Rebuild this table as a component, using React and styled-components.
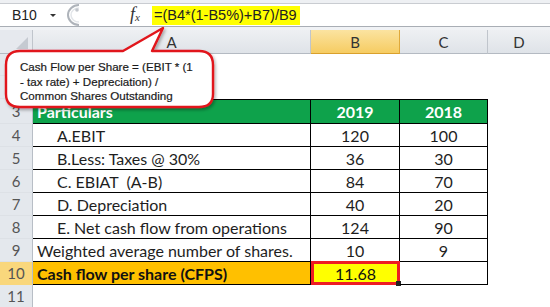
import React from "react";
import styled, { createGlobalStyle, css } from "styled-components";

const GlobalStyle = createGlobalStyle`
  html, body {
    margin: 0;
    padding: 0;
    background: #ffffff;
  }
  body {
    font-family: "Lato", "Liberation Sans", sans-serif;
    color: #222;
  }
`;

const rows = [
  { n: 3, label: "Particulars", b: "2019", c: "2018", kind: "head" },
  { n: 4, label: "A.EBIT", b: "120", c: "100", indent: true },
  { n: 5, label: "B.Less: Taxes @ 30%", b: "36", c: "30", indent: true },
  { n: 6, label: "C. EBIAT  (A-B)", b: "84", c: "70", indent: true },
  { n: 7, label: "D. Depreciation", b: "40", c: "20", indent: true },
  { n: 8, label: "E. Net cash flow from operations", b: "124", c: "90", indent: true },
  { n: 9, label: "Weighted average number of shares.", b: "10", c: "9" },
  { n: 10, label: "Cash flow per share (CFPS)", b: "11.68", c: "", kind: "total" },
];

export default function App() {
  return (
    <>
      <GlobalStyle />
      <Page>
        <FormulaBar>
          <NameBox>
            <span>B10</span>
            <DropArrow />
          </NameBox>
          <Grip>
            <svg width="16" height="22" viewBox="0 0 16 22">
              <path d="M14 1 A11 10 0 0 0 14 21" fill="none" stroke="#aeb3ba" strokeWidth="2" />
              <path d="M14 4 A8 7 0 0 0 14 18" fill="none" stroke="#e2e5e9" strokeWidth="1.5" />
              <circle cx="12" cy="6" r="1.8" fill="#c2c6cc" />
            </svg>
          </Grip>
          <Fx>
            <i>f</i>
            <sub>x</sub>
          </Fx>
          <Formula>=(B4*(1-B5%)+B7)/B9</Formula>
        </FormulaBar>
        <Gap />
        <Sheet>
          <Corner>
            <svg width="14" height="14" viewBox="0 0 14 14">
              <path d="M13 1 L13 13 L1 13 Z" fill="#c5cad1" />
            </svg>
          </Corner>
          <ColHead>A</ColHead>
          <ColHead $active>B</ColHead>
          <ColHead>C</ColHead>
          <ColHead $last>D</ColHead>

          <RowHead>1</RowHead>
          <Blank />
          <Blank />
          <Blank />
          <Blank />
          <RowHead>2</RowHead>
          <Blank />
          <Blank />
          <Blank />
          <Blank />

          {rows.map((r) => (
            <React.Fragment key={r.n}>
              <RowHead $active={r.n === 10}>{r.n}</RowHead>
              <Cell $kind={r.kind} $top={r.n === 3} $indent={r.indent}>
                {r.label}
              </Cell>
              <Cell $kind={r.kind} $center $top={r.n === 3} $selected={r.n === 10}>
                {r.b}
                {r.n === 10 && <FillHandle />}
              </Cell>
              <Cell $kind={r.kind === "head" ? "head" : undefined} $center $top={r.n === 3}>
                {r.c}
              </Cell>
              <Blank />
            </React.Fragment>
          ))}

          <RowHead>11</RowHead>
          <Blank />
          <Blank />
          <Blank />
          <Blank />
        </Sheet>

        <Callout>
          <svg width="550" height="307" viewBox="0 0 550 307">
            <defs>
              <filter id="sh" x="-10%" y="-10%" width="130%" height="140%">
                <feDropShadow dx="1.5" dy="2" stdDeviation="1.5" floodColor="#000" floodOpacity="0.3" />
              </filter>
            </defs>
            <path
              d="M20 51 L123 51 L163 28 L152 51 L199 51 Q213 51 213 65 L213 94 Q213 107 199 107 L20 107 Q6 107 6 94 L6 65 Q6 51 20 51 Z"
              fill="#ffffff"
              stroke="#e1141b"
              strokeWidth="2.4"
              strokeLinejoin="round"
              filter="url(#sh)"
            />
          </svg>
          <CalloutText>
            Cash Flow per Share = (EBIT * (1
            <br />- tax rate) + Depreciation) /
            <br />
            Common Shares Outstanding
          </CalloutText>
        </Callout>
      </Page>
    </>
  );
}

const Page = styled.div`
  position: relative;
  width: 550px;
  height: 307px;
  overflow: hidden;
  background: #ffffff;
`;

const FormulaBar = styled.div`
  height: 22px;
  margin-top: 3px;
  border-top: 1px solid #c9ccd1;
  border-bottom: 1px solid #a9aeb5;
  display: flex;
  align-items: center;
  background: #ffffff;
  box-shadow: 0 -3px 0 #eef0f3;
`;

const NameBox = styled.div`
  width: 62px;
  height: 100%;
  display: flex;
  align-items: center;
  justify-content: space-between;
  padding: 0 6px 0 12px;
  box-sizing: border-box;
  font-family: "Liberation Sans", sans-serif;
  font-size: 14px;
  color: #222;
`;

const DropArrow = styled.span`
  width: 0;
  height: 0;
  border-left: 3px solid transparent;
  border-right: 3px solid transparent;
  border-top: 3px solid #333;
`;

const Grip = styled.div`
  width: 16px;
  height: 22px;
  margin-left: 3px;
  display: flex;
`;

const Fx = styled.div`
  margin-left: 49px;
  width: 21px;
  font-family: "Liberation Serif", serif;
  font-size: 18px;
  line-height: 18px;
  color: #333;
  i {
    font-style: italic;
  }
  sub {
    font-size: 11px;
    font-style: italic;
    vertical-align: -1px;
  }
`;

const Formula = styled.div`
  margin-left: 1px;
  height: 19px;
  line-height: 19px;
  padding: 0 3px 0 2px;
  background: #ffff00;
  font-family: "Liberation Sans", sans-serif;
  font-size: 14.5px;
  color: #222;
`;

const Gap = styled.div`
  height: 3px;
  background: #f0f2f5;
`;

const Sheet = styled.div`
  display: grid;
  grid-template-columns: 33px 278px 89px 88px 62px;
  grid-template-rows: 24px 22px 23px 25px repeat(8, 23px);
`;

const headerBase = css`
  box-sizing: border-box;
  display: flex;
  align-items: center;
  justify-content: center;
  font-family: "Lato", "Liberation Sans", sans-serif;
  font-size: 15px;
  color: #4a4a4a;
`;

const Corner = styled.div`
  ${headerBase};
  background: #e6e9ee;
  border-right: 1px solid #c0c5cc;
  border-bottom: 1px solid #b4bac2;
  justify-content: flex-end;
  align-items: flex-end;
  padding: 0 3px 3px 0;
`;

const ColHead = styled.div`
  ${headerBase};
  background: ${(p) =>
    p.$active
      ? "linear-gradient(#fbe3a0, #f6cc62)"
      : "linear-gradient(#eef0f3, #dfe3e8)"};
  border-right: 1px solid ${(p) => (p.$active ? "#e0a93a" : "#c0c5cc")};
  border-bottom: 1px solid ${(p) => (p.$active ? "#d9a02c" : "#b4bac2")};
  border-right-width: ${(p) => (p.$last ? "0" : "1px")};
  color: #333;
`;

const RowHead = styled.div`
  ${headerBase};
  background: ${(p) => (p.$active ? "#f9d77c" : "#e4e8ed")};
  border-right: 1px solid #b8bec6;
  border-bottom: 1px solid ${(p) => (p.$active ? "#f9d77c" : "#dde1e6")};
  font-size: 15px;
  color: #555;
`;

const Blank = styled.div`
  background: #ffffff;
`;

const Cell = styled.div`
  position: relative;
  box-sizing: border-box;
  display: flex;
  align-items: center;
  justify-content: ${(p) => (p.$center ? "center" : "flex-start")};
  padding-left: ${(p) => (p.$indent ? "24px" : p.$center ? "0" : "4px")};
  white-space: pre;
  font-family: "Lato", "Liberation Sans", sans-serif;
  font-size: 16px;
  color: #1e1e1e;
  border-right: 1px solid #000;
  border-bottom: 1px solid #000;
  border-top: ${(p) => (p.$top ? "1px solid #000" : "0")};
  ${(p) =>
    p.$kind === "head" &&
    css`
      background: #0ea24b;
      color: #ffffff;
      font-weight: 700;
    `}
  ${(p) =>
    p.$kind === "total" &&
    css`
      background: #ffc000;
      font-weight: 700;
      color: #111;
    `}
  ${(p) =>
    p.$selected &&
    css`
      background: #ffff00;
      font-weight: 400;
      border: 3px solid #ee1c24;
      margin-top: -1px;
    `}
`;

const FillHandle = styled.span`
  position: absolute;
  right: -4px;
  bottom: -4px;
  width: 5px;
  height: 5px;
  background: #222;
`;

const Callout = styled.div`
  position: absolute;
  left: 0;
  top: 0;
  width: 550px;
  height: 307px;
  pointer-events: none;
  svg {
    position: absolute;
    left: 0;
    top: 0;
  }
`;

const CalloutText = styled.div`
  position: absolute;
  left: 20px;
  top: 60px;
  font-family: "Liberation Sans", sans-serif;
  font-size: 11.6px;
  line-height: 14.5px;
  color: #1a1a1a;
  -webkit-text-stroke: 0.2px #1a1a1a;
`;
